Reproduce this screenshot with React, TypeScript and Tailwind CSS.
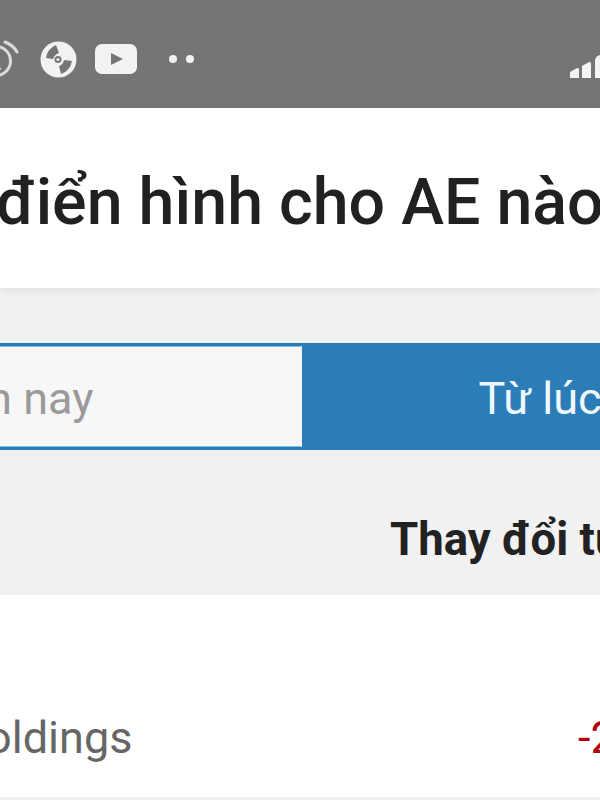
export default function App() {
  return (
    <div className="w-[600px] h-[800px] overflow-hidden bg-[#f1f1f2] font-['Roboto',sans-serif] relative">
      <div className="h-[108px] bg-[#757575] flex items-center justify-between pt-[10px] relative">
        <div className="flex items-center -ml-[21px]">
          <svg width="40" height="40" viewBox="0 0 40 40" fill="none" stroke="#dcdcdc" strokeWidth="3">
            <circle cx="17" cy="22" r="14.5" />
            <path d="M8 16 L17 24 L21 31" />
            <path d="M26 3 Q34 6 38 13" strokeLinecap="round" />
          </svg>
          <svg className="ml-[21px]" width="37" height="37" viewBox="0 0 37 37">
            <circle cx="18.5" cy="18.5" r="18" fill="#f2f2f2" />
            <path d="M6 17 Q7 8 16 4 L19 12 Q15 13 13 18 Z" fill="#757575" />
            <path d="M32 20 Q30 30 21 33 L19 25 Q23 24 24 19 Z" fill="#757575" />
            <circle cx="18" cy="18.5" r="3.5" fill="#757575" />
            <circle cx="18" cy="18.5" r="1.6" fill="#f2f2f2" />
          </svg>
          <svg className="ml-[18px]" width="42" height="30" viewBox="0 0 42 30">
            <rect width="42" height="30" rx="7" fill="#f2f2f2" />
            <path d="M16 9 L28 15 L16 21 Z" fill="#757575" />
          </svg>
          <div className="ml-[32px] flex gap-[9px]">
            <div className="w-[8px] h-[8px] rounded-full bg-[#f2f2f2]" />
            <div className="w-[8px] h-[8px] rounded-full bg-[#f2f2f2]" />
          </div>
        </div>
        <svg className="mt-[15px]" width="30" height="23" viewBox="0 0 30 23" fill="#f4f4f4">
          <path d="M0 17 L7 13 Q9 13 9 14 V23 H0 Z" />
          <path d="M12 11 L19 7 Q21 7 21 8 V23 H12 Z" />
          <path d="M25 5 Q26 1 30 0 V23 H25 Z" />
        </svg>
      </div>

      <div className="h-[180px] bg-white flex items-center shadow-[0_2px_8px_rgba(0,0,0,0.08)] relative">
        <h1 className="-ml-[4px] mt-[9px] whitespace-nowrap text-[64.5px] leading-none font-medium text-[#212121]">
          điển hình cho AE nào
        </h1>
      </div>

      <div className="mt-[55px] h-[107px] flex border-y-[3px] border-[#2a7db6] -ml-[300px] w-[1200px]">
        <div className="w-[601px] bg-[#f8f7f8] flex items-center justify-end pr-[207px] pt-[5px] border-t border-b border-[#7fc0e0]">
          <span className="text-[45px] text-[#9a9a9a] whitespace-nowrap">Năm nay</span>
        </div>
        <div className="w-[599px] ml-[1px] bg-[#2a7db6] flex items-center pl-[177px] pt-[5px]">
          <span className="text-[45px] text-[#f1f8fc] whitespace-nowrap">Từ lúc mua</span>
        </div>
      </div>

      <div className="h-[145px] flex items-center pl-[390px] pt-[36px]">
        <span className="text-[45.5px] font-bold text-[#222222] whitespace-nowrap">Thay đổi từ</span>
      </div>

      <div className="h-[202px] bg-white flex items-end -ml-[46px] w-[646px] justify-between pb-[26px]">
        <span className="text-[45px] text-[#666666] whitespace-nowrap">Holdings</span>
        <span className="text-[45px] text-[#b0000f] whitespace-nowrap -mr-[53px]">-2.5</span>
      </div>
    </div>
  );
}
